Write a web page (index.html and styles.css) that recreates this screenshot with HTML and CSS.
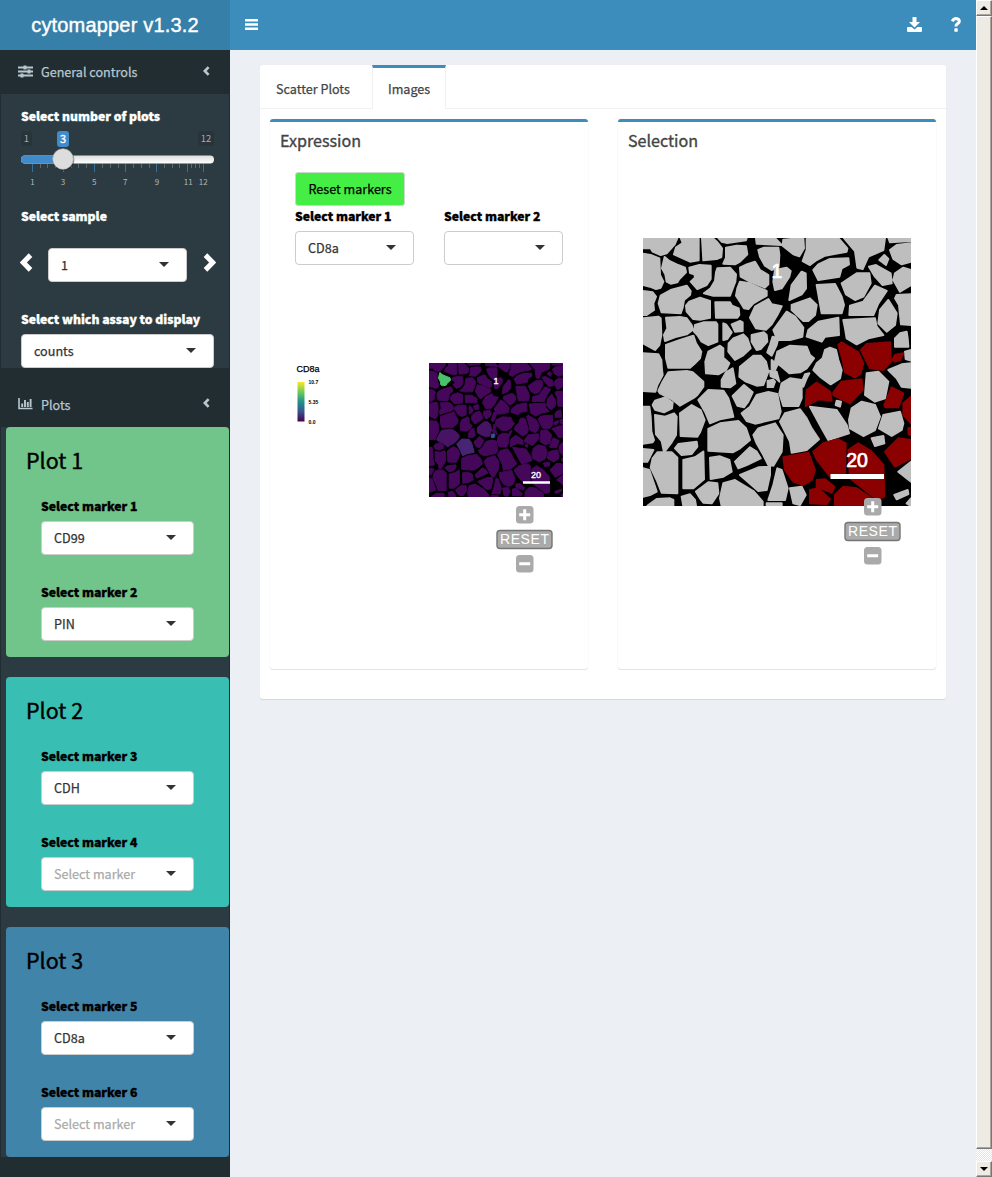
FILE: index.html
```html
<!DOCTYPE html>
<html lang="en">
<head>
<meta charset="utf-8">
<title>cytomapper</title>
<link rel="stylesheet" href="styles.css">
</head>
<body>
<svg class="defs" width="0" height="0">
<symbol id="cells" viewBox="9 9 804 804">
<rect x="9" y="9" width="804" height="804" fill="#000"/>
<g class="cells">
<path d="M9 9H112L104 28 80 55 62 60 38 50 32 40 9 40ZM122 9H176V76L150 80 102 58 108 38 128 24ZM186 9H218L232 22 246 40 244 66 230 72 190 76ZM235 9H320L318 16 262 24 245 20ZM258 38L290 32 318 34 322 58 300 80 285 88 250 86 258 68ZM9 56L32 60 58 70 60 120 70 140 62 158 48 162 30 155 9 150Z"/>
<path d="M148 98L178 90 212 92V132L200 150 172 162 152 140 165 128 163 118 150 114ZM232 100L270 98 288 118 286 140 270 182H220L192 175 212 160 225 138 228 112ZM300 98L320 88 345 80 360 105 385 120V148L375 158 330 140 302 125ZM355 45L372 38H415L418 60 416 95 395 105 375 92 360 65ZM348 9H405L425 30 350 26Z"/>
<path d="M9 168L38 172 48 185 40 205 42 225 20 240H9ZM62 182L92 165 140 152 152 168 150 180 132 195 128 218 122 235 65 232 56 205ZM148 200L180 188 210 198V248L180 254 160 252 140 230 138 212ZM226 202H270L276 212 296 220 298 240 292 248H228ZM300 140L330 145 380 168V182L340 205 325 222 312 220 300 200 288 182 292 160ZM345 215L385 192 395 208 425 214 412 240 395 268 378 284 348 280 330 248ZM405 105L440 98 452 108 448 125 425 160 405 165 400 140Z"/>
<path d="M9 250L55 245 62 250 64 300 58 330 45 345 9 325ZM78 248L120 246 140 250 155 270 158 285 140 298 110 305 75 318 72 300 82 280ZM165 270L190 262H228L232 268V320L205 330 185 320 172 300 162 290ZM250 265L258 268 275 292 262 312 250 315ZM275 268L300 258 308 262V288L285 290ZM280 310L310 298 322 310 332 340 308 362 285 375 265 350 266 325ZM335 300L372 292 380 300 382 320 362 342 350 345 335 320ZM398 305L415 310 410 330 395 362 382 352 390 330Z"/>
<path d="M9 355L55 358 64 375 66 405 68 420 52 450 46 470 9 468ZM78 330L120 315 160 302 168 325 184 350 180 370 162 388 150 398H85L78 370ZM205 350L240 332 250 340V368L268 385 258 405 235 418 198 415 196 380ZM395 375L412 390 405 405 395 402Z"/>
<path d="M45 497L75 487 98 503 96 520 72 532 45 524 38 510ZM9 515H28L32 545 34 590 42 615 38 622 9 626ZM45 540L75 545 102 535 110 545 108 600 95 622 72 652 65 618 48 598ZM120 535L155 510 182 525 194 555 180 592 172 605 122 603ZM105 640L115 627 170 620 172 635 155 657 125 660ZM245 455V435L258 412 278 400 286 445 270 457ZM278 483L312 450 338 472 325 500 312 517 292 512ZM350 480L385 471 412 477 422 530 415 550 345 566 320 558 305 535 330 515ZM390 407L410 410 418 440 408 430 392 424Z"/>
<path d="M205 582L240 565 295 558 318 580 330 615 300 640 278 652 205 647ZM210 668L240 664 268 675 275 710 250 725 212 732ZM285 680L330 637 350 650 362 670 320 690 295 700ZM300 720L355 697 390 695V720L380 765 355 768ZM340 600L355 580 405 565 428 600 425 650 400 692 385 690 370 660 350 625ZM9 642L40 645 30 665 22 680H9ZM38 670L52 652H95L112 668V775L65 773 50 735 32 698ZM130 675L165 667 190 650 192 733 160 760H130ZM168 770L205 742 232 745 235 775 215 805 190 803 180 790ZM250 745L285 735 340 768 368 800V813H245L240 790ZM9 700L28 705 45 755 50 770 30 780 9 785ZM25 810L50 792 90 790 100 795V813H22ZM125 785L150 778 165 795 168 813H130ZM412 700L425 705 443 760 435 795H385L400 750ZM380 805H425V813H380Z"/>
<path d="M430 14L490 9 492 40 478 64 460 58 428 32ZM500 12L595 9 622 40 620 50 555 62 530 75 510 90 488 78 500 45ZM612 9H735L730 45 685 65 668 102 652 98 645 48ZM745 9H813V18L750 22ZM750 45L770 30 813 25V80L785 88 760 72ZM718 75L733 60 745 72 738 90ZM520 105L535 88 570 72 625 70 627 88 605 100 598 125 535 135ZM605 145L650 115H688L692 145 670 185 645 195 618 178ZM687 95L708 90 752 115 755 145 728 150 705 125ZM765 115L790 98 813 105V150L780 170 760 135Z"/>
<path d="M455 150L485 110 497 115 498 160 485 178 448 195ZM530 150L585 147 605 185 612 210 605 235H545ZM455 210L510 190 530 210 525 240 505 258 490 258 455 225ZM705 152L740 168 715 205 700 240H628L630 212 670 200ZM745 195L770 235 765 270 740 290 715 265 720 225ZM770 180L813 178V270L783 268 777 210 765 190ZM400 285L440 230 465 245 490 278 487 305 450 315H412ZM535 260L595 248 597 300 555 305 545 320 500 305 505 285ZM610 255L705 250 710 275 730 300 685 310 650 328 620 310 615 280ZM780 295L800 290 803 310 805 335H765V310Z"/>
<path d="M412 350L450 332 500 335 510 360 522 370 500 400 480 412 448 415 425 395 405 380ZM555 345L570 338 588 345 595 375 605 405 600 430 572 448 540 425 520 405 530 385 548 370ZM795 350L813 345V377L797 372ZM745 405L785 388 813 385V458L785 455 770 430ZM425 445L450 430 485 435V490L475 513H430L418 475ZM495 418L508 415 500 430 490 455 483 445ZM680 415L715 410 745 440 735 490 705 500 675 480ZM590 497L603 500 600 515 587 510ZM405 495L417 505 415 545 405 547Z"/>
<path d="M420 560L435 535 480 523 500 550 515 580 537 613 500 645 455 653 450 620ZM510 515L590 525 620 570 627 595 565 615 545 580ZM635 520L665 500 705 510 720 545 705 585 670 603 630 580 627 555ZM730 540L780 530 790 565 785 585 755 603 717 580ZM695 610L730 603 733 625 705 633ZM775 710L813 680V740ZM450 760L485 755 497 780 480 810 460 805ZM763 780L803 765 805 777 770 793ZM800 805L813 790V813Z"/>
</g>
<g class="selected">
<path d="M595 330L605 322 655 352 670 385 662 415 645 427 615 412 608 375ZM663 345L680 327 750 322 752 380 730 405 690 400ZM757 375L765 360 790 355 780 375 765 380ZM500 465L530 443 570 470 575 497 535 493 497 513ZM580 473L605 440 665 433 667 465 630 505 580 480ZM733 510L755 457 790 475 775 517 735 517ZM790 505L813 485V565L790 540ZM430 667L505 653 525 705 515 735 490 750 460 740 435 705ZM520 650L550 625 595 613 617 625 615 730 570 725 530 673ZM625 645L655 625 695 650 730 690 733 785 710 793 630 730ZM735 650L775 610 813 615V670L765 695ZM530 735L555 733 583 755 575 773 530 755ZM510 765L535 760 570 793 560 807 510 805ZM585 780L610 755 650 760 695 790V813H585ZM805 580L813 578V600L806 598Z"/>
</g>
<path class="cell-green" d="M74 66L88 78 110 88 135 98 138 112 118 132 112 142 92 146 80 140 76 118 66 100Z"/>
<path class="cell-high" d="M175 495L205 465 250 467 265 490 275 525 280 545 240 553 210 565 195 530Z"/>
<path class="cell-mid" d="M85 412L140 408 158 412 190 440V455L172 480 162 488 120 512 95 492 60 475 55 468 68 440ZM300 395L340 362 362 362 378 380 385 410 370 450 350 452 318 440 298 425Z"/>
<path class="cell-blue" d="M382 437L400 433 406 440 400 457 382 457Z"/>
</symbol>
<symbol id="chev" viewBox="0 0 12 18"><path d="M9.800 2L3 9l6.800 7" fill="none" stroke="currentColor" stroke-width="4.800"/></symbol>
</svg>
<div class="app">
<aside class="sidebar">
  <div class="logo">cytomapper v1.3.2</div>
  <div class="menu-head first">
    <svg class="menu-icon" width="15" height="13" viewBox="0 0 15 13"><path d="M0 2.500H15M0 6.500H15M0 10.500H15" stroke="currentColor" stroke-width="2"/><path d="M7 .5V4.500M11 4.500V8.500M4 8.500V12.500" stroke="currentColor" stroke-width="3"/></svg>
    <span>General controls</span><svg class="chev"><use href="#chev"/></svg>
  </div>
  <section class="controls">
    <label>Select number of plots</label>
    <svg class="slider" width="193" height="60" viewBox="21 129 193 60">
      <defs><linearGradient id="track" x2="0" y2="1"><stop stop-color="#ddd"/><stop offset="1" stop-color="#fff"/></linearGradient></defs>
      <rect x="21" y="131" width="11" height="15" rx="3" fill="#27343a"/><rect x="198" y="131" width="16" height="15" rx="3" fill="#27343a"/>
      <rect x="57" y="131" width="12" height="16" rx="3" fill="#428bca"/>
      <text x="26.500" y="142">1</text><text x="206" y="142">12</text><text class="value" x="63" y="142.500">3</text>
      <rect x="21" y="155.500" width="193" height="8" rx="4" fill="url(#track)"/><path d="M25 155.500H63v8H25a4 4 0 0 1 0-8Z" fill="#428bca"/>
      <path d="M32.500 164v8M63.500 164v8M94.500 164v8M125.500 164v8M156.500 164v8M187.500 164v8M203.500 164v8" stroke="#3b7198"/>
      <path d="M40.500 164v4M47.500 164v4M55.500 164v4M71.500 164v4M78.500 164v4M86.500 164v4M102.500 164v4M110.500 164v4M118.500 164v4M133.500 164v4M141.500 164v4M149.500 164v4M164.500 164v4M172.500 164v4M179.500 164v4M191.500 164v4M195.500 164v4M199.500 164v4" stroke="#5d686d"/>
      <circle cx="63.500" cy="160" r="10.800" fill="#1c272c" opacity=".5"/><circle cx="63" cy="159" r="10.300" fill="#ddd" stroke="#b5b5b5" stroke-width=".6"/>
      <g class="ticks"><text x="32.500" y="185">1</text><text x="63" y="185">3</text><text x="94.300" y="185">5</text><text x="125.300" y="185">7</text><text x="157" y="185">9</text><text x="188.300" y="185">11</text><text x="203.300" y="185">12</text></g>
    </svg>
    <label class="sample-label">Select sample</label>
    <div class="sample"><svg class="arrow"><use href="#chev"/></svg><div class="select">1</div><svg class="arrow right"><use href="#chev"/></svg></div>
    <label class="assay-label">Select which assay to display</label>
    <div class="select">counts</div>
  </section>
  <div class="menu-head second">
    <svg class="menu-icon" width="15" height="12" viewBox="0 0 15 12"><path d="M1 0V10.500H14.500" fill="none" stroke="currentColor" stroke-width="1.600"/><path d="M4.200 9V5.500M7 9V2M9.800 9V4M12.600 9V1" stroke="currentColor" stroke-width="1.900"/></svg>
    <span>Plots</span><svg class="chev"><use href="#chev"/></svg>
  </div>
  <section class="plots">
    <div class="plot green"><h3>Plot 1</h3><label>Select marker 1</label><div class="select">CD99</div><label>Select marker 2</label><div class="select">PIN</div></div>
    <div class="plot teal"><h3>Plot 2</h3><label>Select marker 3</label><div class="select">CDH</div><label>Select marker 4</label><div class="select empty">Select marker</div></div>
    <div class="plot blue"><h3>Plot 3</h3><label>Select marker 5</label><div class="select">CD8a</div><label>Select marker 6</label><div class="select empty">Select marker</div></div>
  </section>
</aside>
<main>
  <header>
    <svg class="bars" width="13" height="11" viewBox="0 0 13 11"><path d="M0 1.200H13M0 5.500H13M0 9.800H13" stroke="#fff" stroke-width="2.400"/></svg>
    <svg class="download" width="15" height="15" viewBox="0 0 15 15"><path fill="#fff" d="M5.500 0h4v5H13L7.500 10.500 2 5h3.500ZM1 10h3.500l3 2.500 3-2.500H14q1 0 1 1v3q0 1-1 1H1q-1 0-1-1v-3q0-1 1-1Z"/></svg>
    <svg class="help" width="10" height="15" viewBox="0 0 10 15"><path d="M1.300 4.300Q2.500 1.500 5 1.500 8.300 1.700 8.300 4.300 8.300 6 6 7 5 7.600 5 9.500" fill="none" stroke="#fff" stroke-width="3"/><rect x="3.400" y="11.300" width="3.300" height="3.400" rx=".5" fill="#fff"/></svg>
  </header>
  <div class="card">
    <nav><span>Scatter Plots</span><span class="active">Images</span></nav>
    <div class="panels">
      <section class="box">
        <h4>Expression</h4>
        <button>Reset markers</button>
        <div class="markers"><div><label>Select marker 1</label><div class="select">CD8a</div></div><div><label>Select marker 2</label><div class="select"></div></div></div>
        <div class="expression">
          <svg class="legend" width="60" height="70" viewBox="295 363 60 70"><defs><linearGradient id="viridis" x2="0" y2="1"><stop stop-color="#fde725"/><stop offset=".25" stop-color="#6ccd5a"/><stop offset=".5" stop-color="#21918c"/><stop offset=".75" stop-color="#3b528b"/><stop offset="1" stop-color="#440154"/></linearGradient></defs><text x="296.500" y="372" font-size="9" stroke="#000" stroke-width=".25">CD8a</text><rect x="297.500" y="382" width="7" height="39.500" fill="url(#viridis)"/><g font-size="5" font-weight="bold"><text x="308.500" y="384">10.7</text><text x="308.500" y="404">5.35</text><text x="308.500" y="424">0.0</text></g></svg>
          <svg class="map expr" width="134" height="134" viewBox="0 0 268 268"><use href="#cells" width="268" height="268"/><text x="134" y="41" font-size="18">1</text><text x="214" y="230" font-size="18">20</text><path d="M188 239H242" stroke="#fff" stroke-width="5"/></svg>
        </div>
        <div class="zoomer"><svg width="58" height="68" viewBox="0 0 58 68"><use href="#zoomctl"/></svg></div>
      </section>
      <section class="box">
        <h4>Selection</h4>
        <svg class="map sel" width="268" height="268" viewBox="0 0 268 268"><use href="#cells" width="268" height="268"/><text x="134" y="40" font-size="19.500">1</text><text x="214" y="229" font-size="19.500">20</text><path d="M187.500 238.500H241" stroke="#fff" stroke-width="5"/></svg>
        <div class="zoomer overlap"><svg width="58" height="68" viewBox="0 0 58 68">
          <symbol id="zoomctl" viewBox="0 0 58 68" width="58" height="68"><g fill="#aaa"><rect x="21" y="0" width="17.500" height="17.500" rx="3.500"/><rect x="21" y="49" width="17.500" height="17.500" rx="3.500"/><rect x="2" y="24.500" width="55" height="18" rx="3" stroke="#757575" stroke-width="1.400"/></g><path d="M29.700 3.300v11M24.200 8.800h11M24.200 57.800h11" stroke="#fff" stroke-width="3"/><text class="reset" x="29.800" y="38.300">RESET</text></symbol>
          <use href="#zoomctl"/></svg></div>
      </section>
    </div>
  </div>
</main>
<div class="scrollbar"><div class="sb-btn up"></div><div class="sb-thumb"></div><div class="sb-track"></div><div class="sb-btn down"></div></div>
</div>
</body>
</html>
```
FILE: styles.css
```css
* { box-sizing: border-box; }
body { margin: 0; font-family: "Noto Sans CJK SC", sans-serif; font-size: 12.6px; line-height: 20px; color: #333; background: #ecf0f5; -webkit-text-stroke: .25px currentColor; }
svg { display: block; -webkit-text-stroke: 0; }
svg.defs { position: absolute; }
h3, h4 { margin: 0; font-weight: 400; }
label { display: block; font-weight: 900; font-size: 12.2px; color: #000; height: 20px; -webkit-text-stroke: .35px currentColor; }
.app { display: flex; height: 1177px; overflow: hidden; }
.sidebar { width: 230px; flex: none; background: #222d32; }
.logo { height: 50px; background: #367fa9; color: #fff; font: 20px/50px "Liberation Sans", Arial, sans-serif; text-align: center; letter-spacing: .18px; -webkit-text-stroke: .4px #fff; }
.menu-head { display: flex; align-items: center; color: #b8c7ce; padding: 0 20px 0 18px; }
.menu-head.first { height: 44px; }
.menu-head.second { height: 59px; padding-top: 14px; }
.menu-head span { flex: 1; margin-left: 8px; }
.menu-icon { flex: none; margin-top: -1px; }
.chev { width: 7px; height: 10px; margin-top: -3px; }
.controls { height: 274px; background: #2c3b41; margin: 0 1px; padding: 12px 15px 0 20px; }
.controls label { color: #fff; }
.slider { margin-top: 3px; }
.slider text { font-size: 9.5px; fill: #aaa; text-anchor: middle; }
.slider .value { fill: #fff; font-size: 11px; stroke: #fff; stroke-width: .3; }
.slider .ticks text { font-size: 8px; fill: #b0b7ba; }
.sample-label { margin-top: 17px; }
.sample { display: flex; align-items: center; margin: 22px -2px 0 -1px; }
.sample .select { width: 139px; flex: none; margin: 0 16px 0 15px; }
.arrow { flex: none; width: 13px; height: 19px; color: #fff; margin-top: -6px; }
.arrow.right { transform: scaleX(-1); }
.assay-label { margin-top: 27px; }
.controls > .select { margin-top: 5px; }
.select { position: relative; height: 34px; border: 1px solid #ccc; border-radius: 4px; background: #fff; padding: 6px 12px; color: #333; line-height: 20px; white-space: nowrap; }
.select::after { content: ""; position: absolute; right: 17px; top: 13px; border: 5px solid transparent; border-top-color: #333; border-bottom: 0; }
.select.empty { color: #aaa; }
.plots { background: #2c3b41; margin: 0 1px; display: grid; gap: 20px; height: 730px; }
.plot { height: 230px; margin-left: 5px; border-radius: 4px; padding: 19px 35px 0; }
.plot h3 { font-size: 21.5px; line-height: 28px; margin: 0 0 22px -15px; color: #000; -webkit-text-stroke-width: .4px; }
.plot .select { margin-top: 5px; margin-bottom: 27px; }
.green { background: #71c48a; }
.teal { background: #39beb4; }
.blue { background: #4084aa; }
main { width: 746px; flex: none; }
header { height: 50px; background: #3c8dbc; display: flex; align-items: center; padding: 0 15px 1px 15px; }
.download { margin: 0 29px 0 auto; }
.card { margin: 15px 30px 0; height: 634px; background: #fff; border-radius: 3px; box-shadow: 0 1px 1px rgba(0,0,0,.1); }
nav { display: flex; height: 44px; border-bottom: 1px solid #f0f0f0; color: #444; }
nav span { padding: 14px 16px; width: 112px; white-space: nowrap; }
nav .active { width: 74px; height: 44px; background: #fff; border: 1px solid #f0f0f0; border-width: 0 1px; border-top: 3px solid #3c8dbc; padding: 11px 15px; }
.panels { display: flex; gap: 30px; padding: 10px; }
.box { width: 318px; height: 550px; border-top: 3px solid #3c8dbc; border-radius: 3px; box-shadow: 0 1px 1px rgba(0,0,0,.1), 0 0 1px rgba(0,0,0,.12); padding: 0 25px; }
h4 { font-size: 16.1px; line-height: 20px; margin: 8px 0 0 -15px; color: #444; -webkit-text-stroke-width: .35px; }
button { display: block; margin-top: 22px; width: 110px; height: 34px; padding: 0; background: #4e4; border: 1px solid #ccd8cc; border-radius: 3px; font: inherit; color: #000; -webkit-text-stroke: .25px #000; }
.markers { display: grid; grid-template-columns: 119px 119px; gap: 30px; }
.markers .select { margin-top: 5px; }
.expression { display: flex; justify-content: space-between; margin-top: 98px; }
.legend { font-family: "Liberation Sans", Arial, sans-serif; }
.map text { font-family: "Liberation Sans", Arial, sans-serif; fill: #fff; text-anchor: middle; stroke: #fff; stroke-width: .7; }
.sel { margin-top: 88px; --cell: #bebebe; --sel: #8b0000; --green: #bebebe; --high: #bebebe; --mid: #bebebe; --bluecell: #bebebe; }
.expr { --cell: #44075a; --sel: #44075a; --green: #4ac16d; --high: #482475; --mid: #471365; --bluecell: #33568c; }
.cells, .selected, .cell-green, .cell-high, .cell-mid { stroke-width: 6; stroke-linejoin: round; }
.cells { fill: var(--cell); stroke: var(--cell); }
.selected { fill: var(--sel); stroke: var(--sel); }
.cell-green { fill: var(--green); stroke: var(--green); }
.cell-high { fill: var(--high); stroke: var(--high); }
.cell-mid { fill: var(--mid); stroke: var(--mid); }
.cell-blue { fill: var(--bluecell); stroke: var(--bluecell); stroke-width: 4; }
.zoomer { margin: 9px 0 0 200px; }
.zoomer.overlap { position: relative; margin-top: -8px; }
.reset { font: 14px "Liberation Sans", Arial, sans-serif; fill: #fff; text-anchor: middle; letter-spacing: .6px; }
.scrollbar { width: 16px; flex: none; display: flex; flex-direction: column; background: #f4f2ee; }
.sb-btn, .sb-thumb { background: #eeebe5; border: 1px solid; border-color: #fff #777 #777 #fff; box-shadow: inset -1px -1px #aaa69e; }
.sb-btn { height: 16px; display: flex; align-items: center; justify-content: center; }
.sb-thumb { height: 1133px; }
.sb-track { height: 12px; background: repeating-conic-gradient(#fff 0 25%, #e9e5de 0 50%) 0 0 / 2px 2px; }
.sb-btn::after { content: ""; border: 4px solid transparent; }
.up::after { border-bottom-color: #000; border-top: 0; }
.down::after { border-top-color: #000; border-bottom: 0; }
```
